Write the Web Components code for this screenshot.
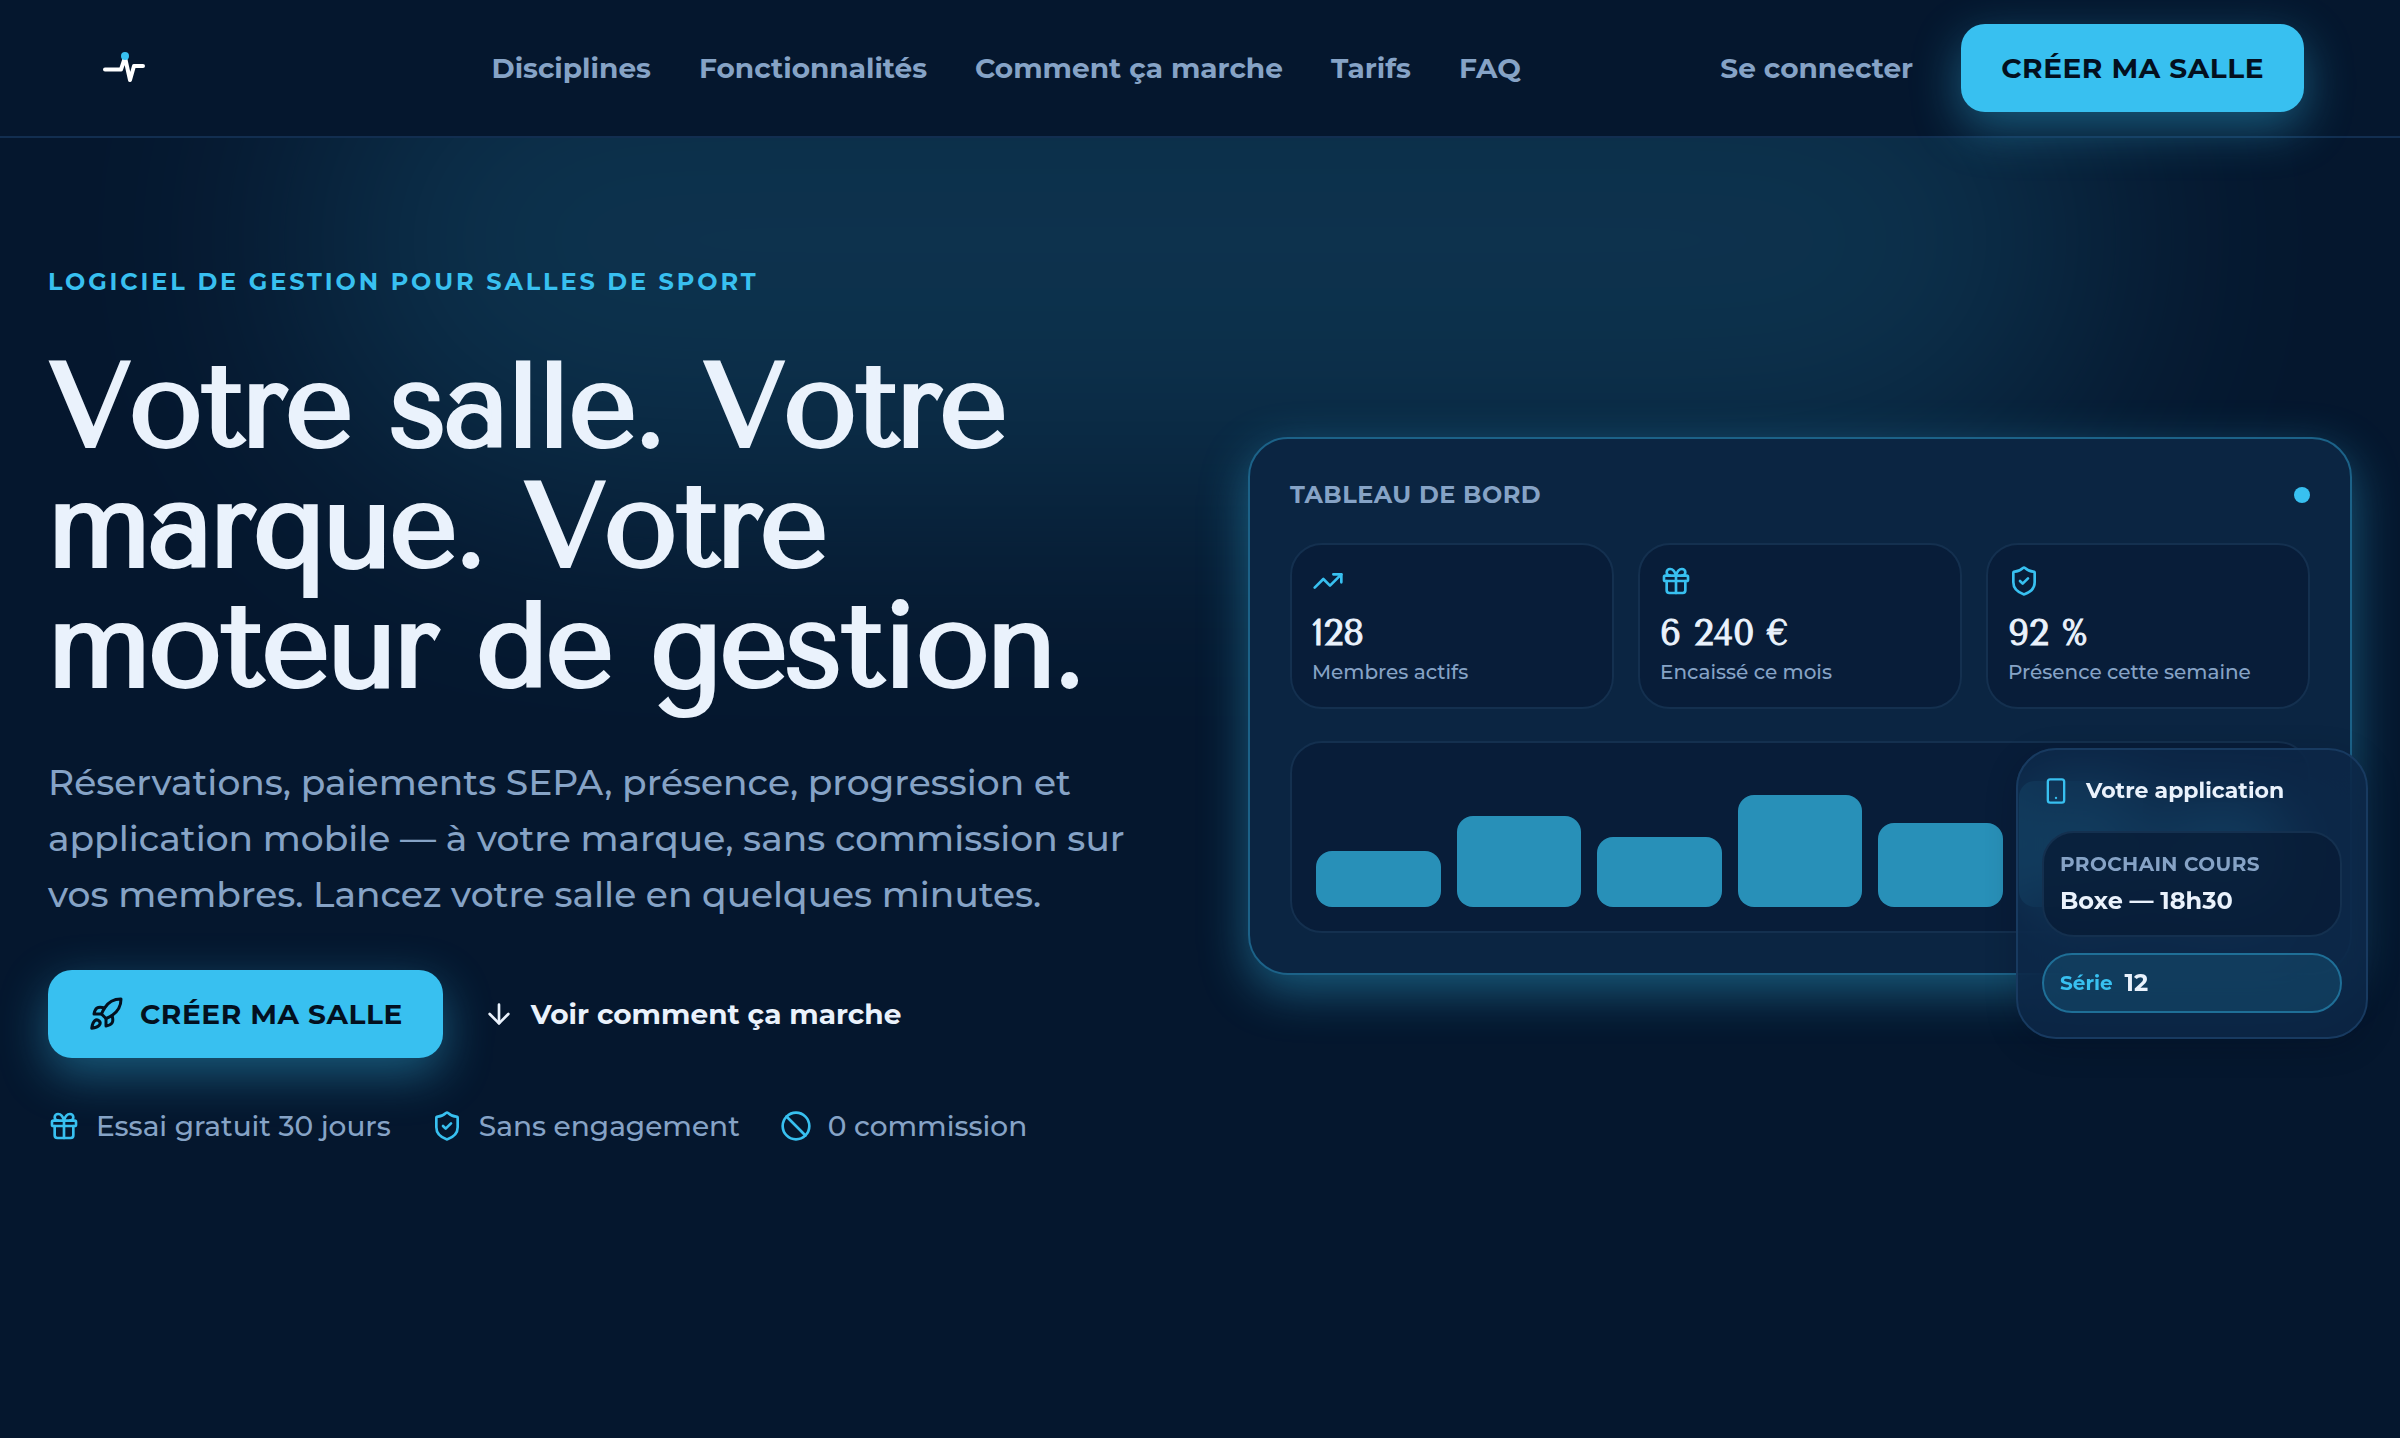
<!DOCTYPE html>
<html lang="fr">
<head>
<meta charset="utf-8">
<meta name="viewport" content="width=device-width, initial-scale=1">
<title>Logiciel de gestion pour salles de sport</title>
<style>
  :root {
    --bg: #05172e;
    --surface: #0b2542;
    --surface-deep: #081d39;
    --line: #14304f;
    --text: #eaf2fc;
    --muted: #86a3c6;
    --accent: #38c0f0;
    --on-accent: #03101f;
    --glow: 0 16px 48px rgba(56, 192, 240, .4);
    --display: "Tenor Sans", Lato, "Liberation Sans", sans-serif;
  }
  body {
    margin: 0;
    min-height: 100vh;
    background: var(--bg);
    color: var(--text);
    font: 500 28px/40px Montserrat, Inter, "Liberation Sans", sans-serif;
  }
</style>
</head>
<body>
<site-header>
  <a slot="nav" href="#disciplines">Disciplines</a>
  <a slot="nav" href="#fonctionnalites">Fonctionnalités</a>
  <a slot="nav" href="#comment">Comment ça marche</a>
  <a slot="nav" href="#tarifs">Tarifs</a>
  <a slot="nav" href="#faq">FAQ</a>
  <a slot="login" href="#connexion">Se connecter</a>
  <cta-link slot="cta" href="#inscription">Créer ma salle</cta-link>
</site-header>

<hero-section>
  <span slot="eyebrow">Logiciel de gestion pour salles de sport</span>
  <span slot="title">Votre salle. Votre marque. Votre moteur de gestion.</span>
  <span slot="lead">Réservations, paiements SEPA, présence, progression et application mobile — à votre marque, sans commission sur vos membres. Lancez votre salle en quelques minutes.</span>
  <cta-link slot="actions" href="#inscription" icon="rocket">Créer ma salle</cta-link>
  <cta-link slot="actions" href="#comment" icon="arrow-down" variant="ghost">Voir comment ça marche</cta-link>
  <trust-item slot="trust" icon="gift">Essai gratuit 30 jours</trust-item>
  <trust-item slot="trust" icon="shield">Sans engagement</trust-item>
  <trust-item slot="trust" icon="ban">0 commission</trust-item>
  <dashboard-card slot="preview" heading="Tableau de bord">
    <stat-tile slot="stats" icon="trending" value="128">Membres actifs</stat-tile>
    <stat-tile slot="stats" icon="gift" value="6 240 €">Encaissé ce mois</stat-tile>
    <stat-tile slot="stats" icon="shield" value="92 %">Présence cette semaine</stat-tile>
    <bar-chart slot="chart" values="40,65,50,80,60,90,75"></bar-chart>
    <app-preview slot="overlay">
      <span slot="title">Votre application</span>
      <span slot="label">Prochain cours</span>
      <span slot="next">Boxe — 18h30</span>
      <span slot="streak-label">Série</span>
      <span slot="streak">12</span>
    </app-preview>
  </dashboard-card>
</hero-section>

<script>
const ICONS = {
  'rocket': '<path d="M4.5 16.5c-1.5 1.26-2 5-2 5s3.74-.5 5-2c.71-.84.7-2.13-.09-2.91a2.18 2.18 0 0 0-2.91-.09z"/><path d="m12 15-3-3a22 22 0 0 1 2-3.95A12.88 12.88 0 0 1 22 2c0 2.72-.78 7.5-6 11a22.35 22.35 0 0 1-4 2z"/><path d="M9 12H4s.55-3.03 2-4c1.62-1.08 5 0 5 0"/><path d="M12 15v5s3.03-.55 4-2c1.08-1.62 0-5 0-5"/>',
  'arrow-down': '<path d="M12 5v14"/><path d="m19 12-7 7-7-7"/>',
  'gift': '<rect x="3" y="8" width="18" height="4" rx="1"/><path d="M12 8v13"/><path d="M19 12v7a2 2 0 0 1-2 2H7a2 2 0 0 1-2-2v-7"/><path d="M7.5 8a2.5 2.5 0 0 1 0-5A4.8 8 0 0 1 12 8a4.8 8 0 0 1 4.5-5 2.5 2.5 0 0 1 0 5"/>',
  'shield': '<path d="M20 13c0 5-3.5 7.5-7.66 8.95a1 1 0 0 1-.67-.01C7.5 20.5 4 18 4 13V6a1 1 0 0 1 1-1c2 0 4.5-1.2 6.24-2.72a1.17 1.17 0 0 1 1.52 0C14.51 3.81 17 5 19 5a1 1 0 0 1 1 1z"/><path d="m9 12 2 2 4-4"/>',
  'ban': '<circle cx="12" cy="12" r="10"/><path d="m4.9 4.9 14.2 14.2"/>',
  'trending': '<path d="M16 7h6v6"/><path d="m22 7-8.5 8.5-5-5L2 17"/>',
  'phone': '<rect x="5" y="2" width="14" height="20" rx="2"/><path d="M12 18h.01"/>'
};

// Shared base: fills an open shadow root with the element's markup
class BaseElement extends HTMLElement {
  constructor() {
    super();
    this.attachShadow({ mode: 'open' });
  }

  connectedCallback() {
    this.shadowRoot.innerHTML = this.render();
  }

  attr(name, fallback = '') {
    return this.getAttribute(name) || fallback;
  }
}

class UiIcon extends BaseElement {
  render() {
    return `
      <style>
        :host { display: block; flex: none; width: var(--icon-size, 32px); height: var(--icon-size, 32px); }
        svg { display: block; width: 100%; height: 100%; fill: none; stroke: currentColor; stroke-width: 2; stroke-linecap: round; stroke-linejoin: round; }
      </style>
      <svg viewBox="0 0 24 24" aria-hidden="true">${ICONS[this.attr('name')]}</svg>`;
  }
}

class BrandLogo extends BaseElement {
  render() {
    return `
      <style>
        :host { display: block; }
        svg { display: block; width: 196px; height: 64px; }
      </style>
      <svg viewBox="0 0 196 64" role="img" aria-label="Accueil">
        <path d="M9 33.5h16l4-12 5 22.500 4-14h9" fill="none" stroke="#fff" stroke-width="4" stroke-linecap="round" stroke-linejoin="round"/>
        <circle cx="29" cy="20" r="4" fill="#38c0f0"/>
      </svg>`;
  }
}

class SiteHeader extends BaseElement {
  render() {
    return `
      <style>
        :host { display: block; position: relative; z-index: 1; background: var(--bg); border-bottom: 2px solid #122e50; }
        header { display: flex; align-items: center; justify-content: space-between; padding: 24px 96px; }
        nav, .account { display: flex; align-items: center; gap: 48px; font-weight: 700; }
        ::slotted(a) { color: var(--muted); text-decoration: none; }
      </style>
      <header>
        <brand-logo></brand-logo>
        <nav><slot name="nav"></slot></nav>
        <div class="account"><slot name="login"></slot><slot name="cta"></slot></div>
      </header>`;
  }
}

class CtaLink extends BaseElement {
  render() {
    const icon = this.attr('icon');
    return `
      <style>
        :host { display: block; --icon-size: 36px; }
        a {
          display: flex; align-items: center; gap: 16px; padding: 24px 40px; border-radius: 24px;
          background: var(--accent); color: var(--on-accent); box-shadow: var(--glow);
          font-weight: 700; letter-spacing: .02em; text-decoration: none; text-transform: uppercase;
        }
        :host([variant=ghost]) { --icon-size: 32px; }
        :host([variant=ghost]) a { padding: 24px 8px; background: none; color: var(--text); box-shadow: none; letter-spacing: 0; text-transform: none; }
      </style>
      <a href="${this.attr('href', '#')}">${icon ? `<ui-icon name="${icon}"></ui-icon>` : ''}<span><slot></slot></span></a>`;
  }
}

class TrustItem extends BaseElement {
  render() {
    return `
      <style>
        :host { display: flex; align-items: center; gap: 16px; color: var(--muted); }
        ui-icon { color: var(--accent); }
      </style>
      <ui-icon name="${this.attr('icon')}"></ui-icon><span><slot></slot></span>`;
  }
}

class HeroSection extends BaseElement {
  render() {
    return `
      <style>
        :host { display: block; position: relative; }
        /* soft light behind the content */
        .halo { position: absolute; inset: -154px 0 auto; width: 75%; height: 512px; margin: 0 auto; border-radius: 9999px; background: var(--accent); opacity: .16; filter: blur(128px); }
        section { position: relative; display: grid; grid-template-columns: 1fr 1fr; gap: 96px; align-items: center; padding: 128px 48px; }
        .copy { display: flex; flex-direction: column; gap: 48px; min-width: 0; }
        p, h1 { margin: 0; }
        .eyebrow { color: var(--accent); font-size: 24px; line-height: 32px; font-weight: 700; letter-spacing: .12em; text-transform: uppercase; }
        h1 { font: 400 120px/120px var(--display); letter-spacing: -.025em; -webkit-text-stroke: 4px currentColor; }
        .lead { color: var(--muted); font-size: 36px; line-height: 56px; }
        .actions { display: flex; gap: 32px; }
        .trust { display: flex; gap: 40px; }
      </style>
      <div class="halo"></div>
      <section>
        <div class="copy">
          <p class="eyebrow"><slot name="eyebrow"></slot></p>
          <h1><slot name="title"></slot></h1>
          <p class="lead"><slot name="lead"></slot></p>
          <div class="actions"><slot name="actions"></slot></div>
          <div class="trust"><slot name="trust"></slot></div>
        </div>
        <slot name="preview"></slot>
      </section>`;
  }
}

class DashboardCard extends BaseElement {
  render() {
    return `
      <style>
        :host { display: block; position: relative; }
        .card { display: flex; flex-direction: column; gap: 32px; padding: 40px; border: 2px solid #1c6288; border-radius: 40px; background: var(--surface); box-shadow: var(--glow); }
        header { display: flex; align-items: center; justify-content: space-between; color: var(--muted); }
        h2 { margin: 0; font-size: 24px; line-height: 32px; font-weight: 700; letter-spacing: .02em; text-transform: uppercase; }
        .dot { width: 16px; height: 16px; border-radius: 50%; background: var(--accent); }
        .stats { display: grid; grid-template-columns: repeat(3, 1fr); gap: 24px; }
        /* phone preview hangs over the bottom right corner */
        .overlay { position: absolute; right: -16px; bottom: -64px; }
      </style>
      <div class="card">
        <header><h2>${this.attr('heading')}</h2><span class="dot"></span></header>
        <div class="stats"><slot name="stats"></slot></div>
        <slot name="chart"></slot>
      </div>
      <div class="overlay"><slot name="overlay"></slot></div>`;
  }
}

class StatTile extends BaseElement {
  render() {
    return `
      <style>
        :host { display: block; padding: 20px; border: 2px solid var(--line); border-radius: 32px; background: var(--surface-deep); }
        ui-icon { color: var(--accent); }
        .value { margin-top: 16px; font: 400 36px/40px var(--display); -webkit-text-stroke: 1px currentColor; }
        .label { margin-top: 4px; color: var(--muted); font-size: 20px; line-height: 30px; }
      </style>
      <ui-icon name="${this.attr('icon')}"></ui-icon>
      <div class="value">${this.attr('value')}</div>
      <div class="label"><slot></slot></div>`;
  }
}

class BarChart extends BaseElement {
  render() {
    const bars = this.attr('values').split(',').map((v) => `<i style="height: ${v}%"></i>`).join('');
    return `
      <style>
        :host { display: block; padding: 24px; border: 2px solid var(--line); border-radius: 32px; background: var(--surface-deep); }
        .bars { display: flex; align-items: flex-end; gap: 16px; height: 140px; }
        i { flex: 1; border-radius: 16px; background: #2890b8; }
      </style>
      <div class="bars">${bars}</div>`;
  }
}

class AppPreview extends BaseElement {
  render() {
    return `
      <style>
        :host {
          display: flex; flex-direction: column; gap: 16px; box-sizing: border-box; width: 352px; padding: 24px;
          border: 2px solid #183a60; border-radius: 40px; background: rgba(13, 39, 71, .8);
          box-shadow: 0 8px 32px rgba(2, 10, 24, .2); backdrop-filter: blur(32px); --icon-size: 28px;
          font-weight: 700;
        }
        .title { display: flex; align-items: center; gap: 16px; margin-bottom: 8px; font-size: 22px; line-height: 33px; }
        ui-icon { color: var(--accent); }
        .next { padding: 16px; border: 2px solid var(--line); border-radius: 32px; background: rgba(8, 27, 54, .8); }
        .label { margin-bottom: 4px; color: var(--muted); font-size: 20px; line-height: 30px; letter-spacing: .02em; text-transform: uppercase; }
        .value { font-size: 24px; line-height: 36px; }
        .streak { display: flex; align-items: center; gap: 12px; padding: 10px 16px; border: 2px solid #1f6f97; border-radius: 32px; background: rgba(56, 192, 240, .13); }
        .streak-label { color: var(--accent); font-size: 20px; line-height: 30px; }
      </style>
      <div class="title"><ui-icon name="phone"></ui-icon><slot name="title"></slot></div>
      <div class="next">
        <div class="label"><slot name="label"></slot></div>
        <div class="value"><slot name="next"></slot></div>
      </div>
      <div class="streak">
        <span class="streak-label"><slot name="streak-label"></slot></span>
        <span class="value"><slot name="streak"></slot></span>
      </div>`;
  }
}

customElements.define('ui-icon', UiIcon);
customElements.define('brand-logo', BrandLogo);
customElements.define('site-header', SiteHeader);
customElements.define('cta-link', CtaLink);
customElements.define('trust-item', TrustItem);
customElements.define('hero-section', HeroSection);
customElements.define('dashboard-card', DashboardCard);
customElements.define('stat-tile', StatTile);
customElements.define('bar-chart', BarChart);
customElements.define('app-preview', AppPreview);
</script>
</body>
</html>
